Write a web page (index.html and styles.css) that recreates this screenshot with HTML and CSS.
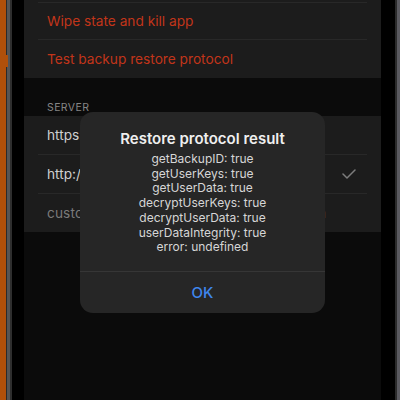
FILE: index.html
```html
<!DOCTYPE html>
<html>
<head>
<meta charset="utf-8">
<link rel="stylesheet" href="styles.css">
</head>
<body>
<div class="device">
  <div class="bezel-left">
    <div class="orange"><div class="bump"></div></div>
    <div class="rim-a"></div>
    <div class="rim-b"></div>
    <div class="rim-c"></div>
  </div>
  <div class="screen">
    <div class="group group-top">
      <div class="stub"></div>
      <div class="sep"></div>
      <div class="row row-a danger">Wipe state and kill app</div>
      <div class="sep"></div>
      <div class="row row-b danger">Test backup restore protocol</div>
    </div>
    <div class="header">SERVER</div>
    <div class="group">
      <div class="row">https://api.example.com</div>
      <div class="sep"></div>
      <div class="row">http://localhost:8080<svg class="check" width="14" height="10" viewBox="0 0 14 10"><path d="M1 5 L5 9 L13 1" fill="none" stroke="#7d7d7d" stroke-width="1.5" stroke-linecap="round" stroke-linejoin="round"/></svg></div>
      <div class="sep"></div>
      <div class="row placeholder">custom server url for local testing platform</div>
    </div>
    <div class="dialog">
      <div class="title">Restore protocol result</div>
      <div class="msg">
        <div>getBackupID: true</div>
        <div>getUserKeys: true</div>
        <div>getUserData: true</div>
        <div>decryptUserKeys: true</div>
        <div>decryptUserData: true</div>
        <div>userDataIntegrity: true</div>
        <div>error: undefined</div>
      </div>
      <div class="btn">OK</div>
    </div>
  </div>
  <div class="bezel-right">
    <div class="rim-d"></div>
    <div class="rim-e"></div>
    <div class="rim-f"></div>
  </div>
</div>
</body>
</html>
```
FILE: styles.css
```css
html, body {
  margin: 0;
  padding: 0;
  background: #000;
}
body {
  font-family: Inter, "Noto Sans", sans-serif;
  width: 400px;
  height: 400px;
  overflow: hidden;
}
.device {
  display: flex;
  height: 400px;
}
.bezel-left {
  display: flex;
  width: 24px;
  flex: none;
}
.orange {
  width: 6px;
  background: #b0500a;
  position: relative;
}
.bump {
  position: absolute;
  left: 6px;
  top: 55px;
  width: 2px;
  height: 12px;
  background: #b0500a;
}
.rim-a { width: 1px; background: #2a2a2a; }
.rim-b { width: 3px; background: #555; }
.rim-c { flex: 1; background: linear-gradient(to right, #2e2e2e 0 2px, #000 2px); }
.screen {
  width: 357px;
  flex: none;
  background: #0b0b0b;
  position: relative;
}
.bezel-right {
  flex: 1;
  display: flex;
}
.rim-d { width: 14px; background: #000; }
.rim-e { width: 2px; background: #2b2b2b; }
.rim-f { flex: 1; background: #5a5a60; }
.group {
  background: #1c1c1c;
}
.stub { height: 2px; }
.sep {
  height: 1px;
  background: #282828;
  margin: 0 14px;
}
.row {
  height: 38px;
  display: flex;
  align-items: center;
  padding-left: 23px;
  padding-right: 25px;
  font-size: 13.7px;
  color: #cfcfcf;
  white-space: nowrap;
  overflow: hidden;
}
.row-a { height: 36px; }
.row-b { height: 38px; }
.danger { color: #c2351a; }
.placeholder { color: #7a7a7a; letter-spacing: 0.1px; }
.check { margin-left: auto; }
.header {
  height: 38px;
  box-sizing: border-box;
  padding: 23px 0 0 23px;
  font-size: 10.5px;
  letter-spacing: 0.4px;
  color: #858585;
}
.dialog {
  position: absolute;
  left: 56px;
  top: 112px;
  width: 245px;
  height: 201px;
  background: #262626;
  border-radius: 13px;
  display: flex;
  flex-direction: column;
  text-align: center;
  overflow: hidden;
}
.title {
  margin-top: 16px;
  font-size: 15px;
  line-height: 22px;
  font-weight: 600;
  color: #efefef;
}
.msg {
  margin-top: 2px;
  font-size: 12px;
  line-height: 14.7px;
  color: #d6d6d6;
}
.btn {
  margin-top: auto;
  height: 41px;
  border-top: 1px solid #363636;
  display: flex;
  align-items: center;
  justify-content: center;
  font-size: 15px;
  font-weight: 500;
  color: #3f87ee;
}
```
